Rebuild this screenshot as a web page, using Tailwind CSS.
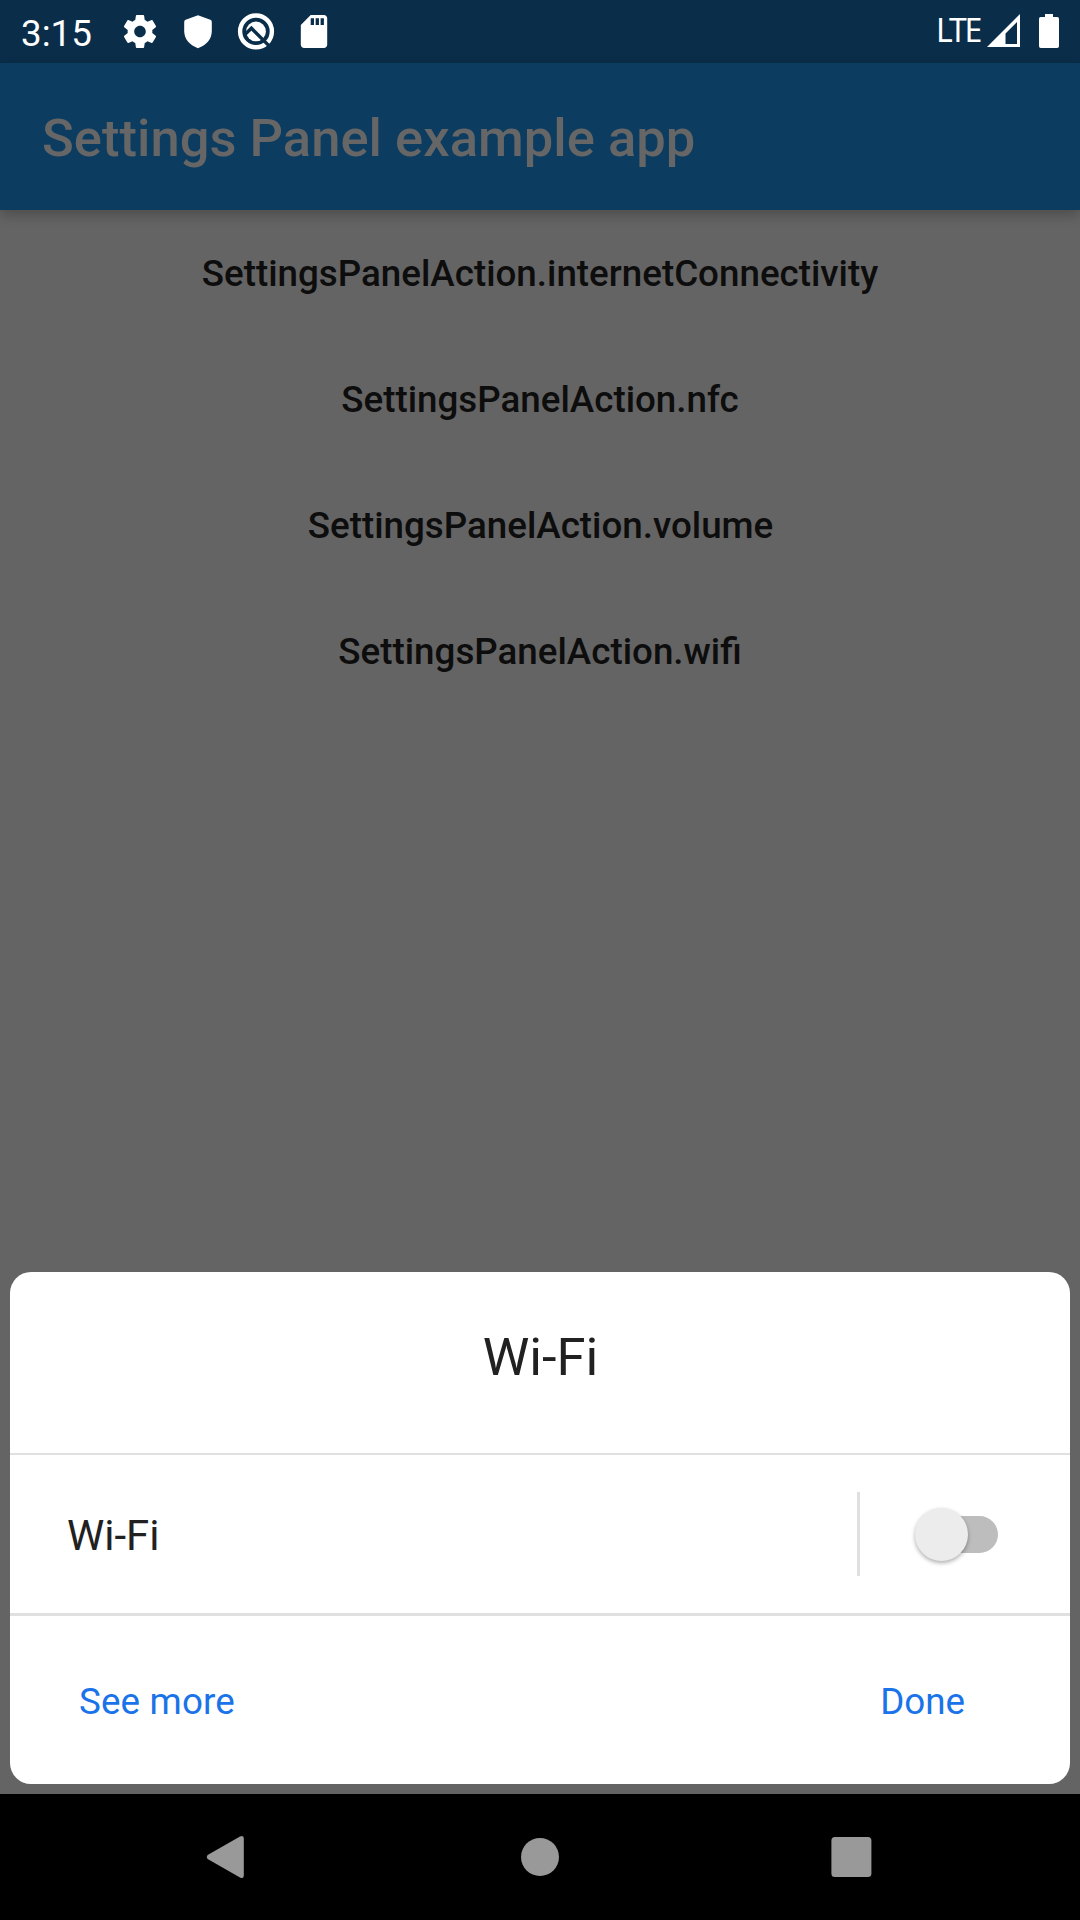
<!DOCTYPE html>
<html lang="en">
<head>
<meta charset="utf-8">
<title>Settings Panel example app</title>
<script src="https://cdn.jsdelivr.net/npm/@tailwindcss/browser@4"></script>
</head>
<body class="flex h-[1920px] w-[1080px] flex-col overflow-hidden bg-[#646464] font-['Roboto',sans-serif]">

  <!-- Status bar -->
  <div class="flex h-[63px] shrink-0 justify-between bg-[#0a2d49] text-white">
    <div class="flex pl-[21px]">
      <span class="w-[71px] pt-3 text-[36.75px] leading-[43px]">3:15</span>
      <svg class="ml-7 h-[63px] w-[216px]" viewBox="120 0 216 63" fill="#fff">
        <path transform="translate(120.2 11.7) scale(1.65)" d="M19.43 12.98c.04-.32.07-.64.07-.98s-.03-.66-.07-.98l2.11-1.65c.19-.15.24-.42.12-.64l-2-3.46c-.12-.22-.39-.3-.61-.22l-2.49 1c-.52-.4-1.08-.73-1.69-.98l-.38-2.65C14.46 2.18 14.25 2 14 2h-4c-.25 0-.46.18-.49.42l-.38 2.65c-.61.25-1.17.59-1.69.98l-2.49-1c-.23-.09-.49 0-.61.22l-2 3.46c-.13.22-.07.49.12.64l2.11 1.65c-.04.32-.07.65-.07.98s.03.66.07.98l-2.11 1.65c-.19.15-.24.42-.12.64l2 3.46c.12.22.39.3.61.22l2.49-1c.52.4 1.08.73 1.69.98l.38 2.65c.03.24.24.42.49.42h4c.25 0 .46-.18.49-.42l.38-2.65c.61-.25 1.17-.59 1.69-.98l2.49 1c.23.09.49 0 .61-.22l2-3.46c.12-.22.07-.49-.12-.64l-2.11-1.65zM12 15.5c-1.93 0-3.5-1.57-3.5-3.5s1.57-3.5 3.5-3.5 3.5 1.57 3.5 3.5-1.57 3.5-3.5 3.5z"/>
        <path d="M198 15.2 210.4 19.8Q211.8 20.4 211.8 22V31C211.8 38.6 207 44.8 198 48.2 189 44.8 184.2 38.6 184.2 31V22Q184.2 20.4 185.6 19.8Z"/>
        <circle cx="256" cy="31.4" r="15.9" fill="none" stroke="#fff" stroke-width="4.4"/>
        <circle cx="256" cy="31.4" r="9.9"/>
        <path d="M245.200 34.200 251.400 28.200 269.600 46.400" fill="none" stroke="#0a2d49" stroke-width="3.4"/>
        <path transform="translate(294.2 11.7) scale(1.65)" d="M18 2h-8L4.020 8 4 20c0 1.100.900 2 2 2h12c1.100 0 2-.900 2-2V4c0-1.100-.900-2-2-2zm-6 6h-2V4h2v4zm3 0h-2V4h2v4zm3 0h-2V4h2v4z"/>
      </svg>
    </div>
    <div class="flex pr-[21px]">
      <span class="w-[51px] pt-2 font-['Noto_Sans',sans-serif] text-[32px] leading-[44px] whitespace-nowrap"><span class="tracking-[-3.8px]">L</span><span class="tracking-[-2.4px]">T</span>E</span>
      <svg class="h-[63px] w-[72px]" viewBox="987 0 72 63" fill="#fff">
        <path fill-rule="evenodd" d="M1020 14V47H987ZM1017 22 1005.5 33.5V44H1017Z"/>
        <path d="M1045 14H1053V17H1057.200Q1059 17 1059 18.8V46.200Q1059 48 1057.200 48H1040.800Q1039 48 1039 46.200V18.800Q1039 17 1040.800 17H1045Z"/>
      </svg>
    </div>
  </div>

  <!-- App bar -->
  <header class="h-[147px] shrink-0 bg-[#0d3c61] pt-11 pl-[42px] shadow-[0_5px_12px_rgba(0,0,0,0.24)]">
    <h1 class="text-[52.5px] leading-[62px] font-medium tracking-[0.03px] text-[#666]">Settings Panel example app</h1>
  </header>

  <!-- Panel actions -->
  <main class="flex grow flex-col text-center text-[36.75px] leading-[43px] font-medium text-[#0d0d0d]">
    <div class="h-[126px] pt-[42px]">SettingsPanelAction.internetConnectivity</div>
    <div class="h-[126px] pt-[42px]">SettingsPanelAction.nfc</div>
    <div class="h-[126px] pt-[42px] pl-px">SettingsPanelAction.volume</div>
    <div class="h-[126px] pt-[42px]">SettingsPanelAction.wifi</div>
  </main>

  <!-- Wi-Fi sheet -->
  <section class="mx-[10px] mb-[10px] flex h-[512px] shrink-0 flex-col rounded-[21px] bg-white text-[#212121]">
    <h2 class="h-[183px] shrink-0 border-b-2 border-[#e0e0e0] pt-[54px] pl-px text-center text-[52.5px] leading-[62px]">Wi-Fi</h2>
    <div class="flex h-[161px] shrink-0 justify-between border-b-3 border-[#e0e0e0]">
      <span class="pt-14 pl-[57px] text-[42px] leading-[49px]">Wi-Fi</span>
      <div class="flex items-center pr-[72px]">
        <div class="h-[84px] w-[3px] bg-[#e0e0e0]"></div>
        <div class="ml-[55px] flex w-[83px] items-center">
          <div class="z-10 size-[53px] shrink-0 rounded-full bg-[#ececec] shadow-[0_2px_4px_rgba(0,0,0,0.32)]"></div>
          <div class="-ml-[45px] h-[37px] w-[75px] shrink-0 rounded-full bg-[#bdbdbd]"></div>
        </div>
      </div>
    </div>
    <div class="flex justify-between pt-16 pr-[105px] pl-[69px] text-[36.75px] leading-[43px] text-[#1a73e8]">
      <span class="tracking-[0.15px]">See more</span>
      <span>Done</span>
    </div>
  </section>

  <!-- Navigation bar -->
  <nav class="flex h-[126px] shrink-0 bg-black">
    <svg class="h-[126px] w-[1080px]" viewBox="0 1794 1080 126" fill="#999">
      <path d="M207.600 1855.100 240 1836.500Q243.800 1834.800 243.800 1838.500V1875.500Q243.800 1879.200 240 1877.500L207.600 1858.900Q205.800 1857 207.600 1855.100Z"/>
      <circle cx="540" cy="1857" r="19"/>
      <rect x="831.400" y="1837" width="40" height="40" rx="3.500"/>
    </svg>
  </nav>
</body>
</html>
